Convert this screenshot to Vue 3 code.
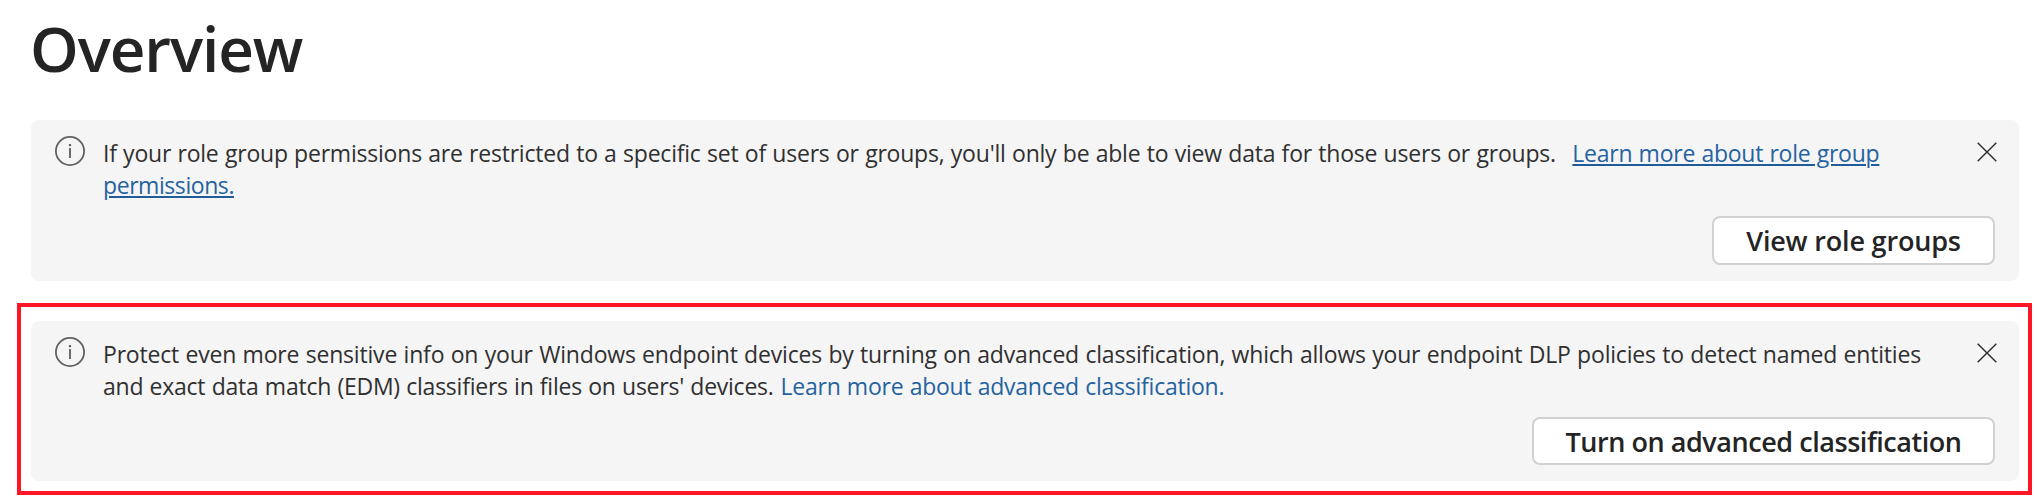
<script setup>
const notices = [
  {
    id: 'roles',
    lines: [
      [
        { text: "If your role group permissions are restricted to a specific set of users or groups, you'll only be able to view data for those users or groups.", cls: 'copy-a' },
        { text: 'Learn more about role group', cls: 'link underlined role-link' }
      ],
      [{ text: 'permissions.', cls: 'link underlined role-link-end' }]
    ],
    action: 'View role groups'
  },
  {
    id: 'advanced',
    lines: [
      [{ text: 'Protect even more sensitive info on your Windows endpoint devices by turning on advanced classification, which allows your endpoint DLP policies to detect named entities', cls: 'copy-b' }],
      [
        { text: "and exact data match (EDM) classifiers in files on users' devices.", cls: 'copy-c' },
        { text: 'Learn more about advanced classification.', cls: 'link advanced-link' }
      ]
    ],
    action: 'Turn on advanced classification'
  }
]
</script>

<template>
  <main class="page">
    <h1 class="title">Overview</h1>
    <div v-for="n in notices" :key="n.id" class="frame" :class="n.id">
      <section class="notice">
        <div class="top">
          <svg class="info" width="30" height="30" viewBox="0 0 30 30">
            <circle cx="15" cy="15" r="14.1" fill="none" stroke="#616161" stroke-width="1.8" />
            <rect x="14" y="12" width="2" height="10" fill="#6a6a6a" />
            <rect x="13.9" y="8" width="2.2" height="2.2" rx="0.6" fill="#616161" />
          </svg>
          <div class="message">
            <div v-for="(line, i) in n.lines" :key="i" class="line">
              <component :is="part.cls.includes('link') ? 'a' : 'span'" v-for="part in line" :key="part.text" :class="part.cls">{{ part.text }}</component>
            </div>
          </div>
          <svg class="close" width="20" height="20" viewBox="0 0 20 20">
            <path d="M0.7 0.7L19.3 19.3M19.3 0.7L0.7 19.3" stroke="#2b2b2b" stroke-width="1.4" fill="none" />
          </svg>
        </div>
        <button class="action">{{ n.action }}</button>
      </section>
    </div>
  </main>
</template>

<style>
body {
  background: #fff;
}
</style>

<style scoped>
.page {
  box-sizing: border-box;
  width: 2038px;
  height: 502px;
  padding: 6px 0 0;
  overflow: hidden;
  font-family: "Open Sans", "Noto Sans", sans-serif;
  color: #242424;
}
.title {
  margin: 0 0 30px 30px;
  font-size: 62px;
  line-height: 84px;
  font-weight: 600;
  letter-spacing: -1.1px;
}
.frame {
  box-sizing: border-box;
}
.roles {
  padding: 0 19px 0 31px;
}
.advanced {
  width: 2015px;
  height: 192px;
  margin: 22px 0 0 17px;
  padding: 14px 9px 0 10px;
  border: 4px solid #ff1626;
}
.notice {
  box-sizing: border-box;
  display: flex;
  flex-direction: column;
  align-items: flex-end;
  justify-content: space-between;
  height: 161px;
  padding: 16px 24px 16px 24px;
  border-radius: 8px;
  background: #f5f5f5;
}
.advanced .notice {
  height: 160px;
}
.top {
  display: flex;
  width: 100%;
  align-items: flex-start;
}
.info {
  flex: none;
  margin-right: 18px;
}
.message {
  flex: 1;
  min-width: 0;
  padding-top: 1px;
  font-size: 23px;
  line-height: 32px;
  word-spacing: 0.6px;
  color: #303030;
}
.line {
  display: flex;
  white-space: nowrap;
}
.copy-a {
  letter-spacing: -0.214px;
  margin-right: 16.5px;
}
.copy-b {
  letter-spacing: -0.185px;
}
.copy-c {
  letter-spacing: -0.24px;
  margin-right: 7px;
}
.link {
  color: #2563a0;
}
.underlined {
  text-decoration: underline;
  text-decoration-color: #1f5c99;
  text-decoration-thickness: 2px;
  text-underline-offset: 2px;
}
.role-link {
  letter-spacing: -0.25px;
}
.role-link-end {
  letter-spacing: -0.43px;
}
.advanced-link {
  letter-spacing: -0.25px;
}
.close {
  flex: none;
  margin: 6px -2px 0 0;
}
.action {
  box-sizing: border-box;
  width: 283px;
  height: 49px;
  padding: 0;
  border: 2px solid #d1d1d1;
  border-radius: 8px;
  background: #fff;
  color: #242424;
  font-family: inherit;
  font-size: 27px;
  font-weight: 600;
  line-height: 45px;
  letter-spacing: -0.18px;
  white-space: nowrap;
}
.advanced .action {
  width: 463px;
  height: 48px;
  padding-top: 1px;
  line-height: 43px;
  letter-spacing: -0.45px;
}
</style>
